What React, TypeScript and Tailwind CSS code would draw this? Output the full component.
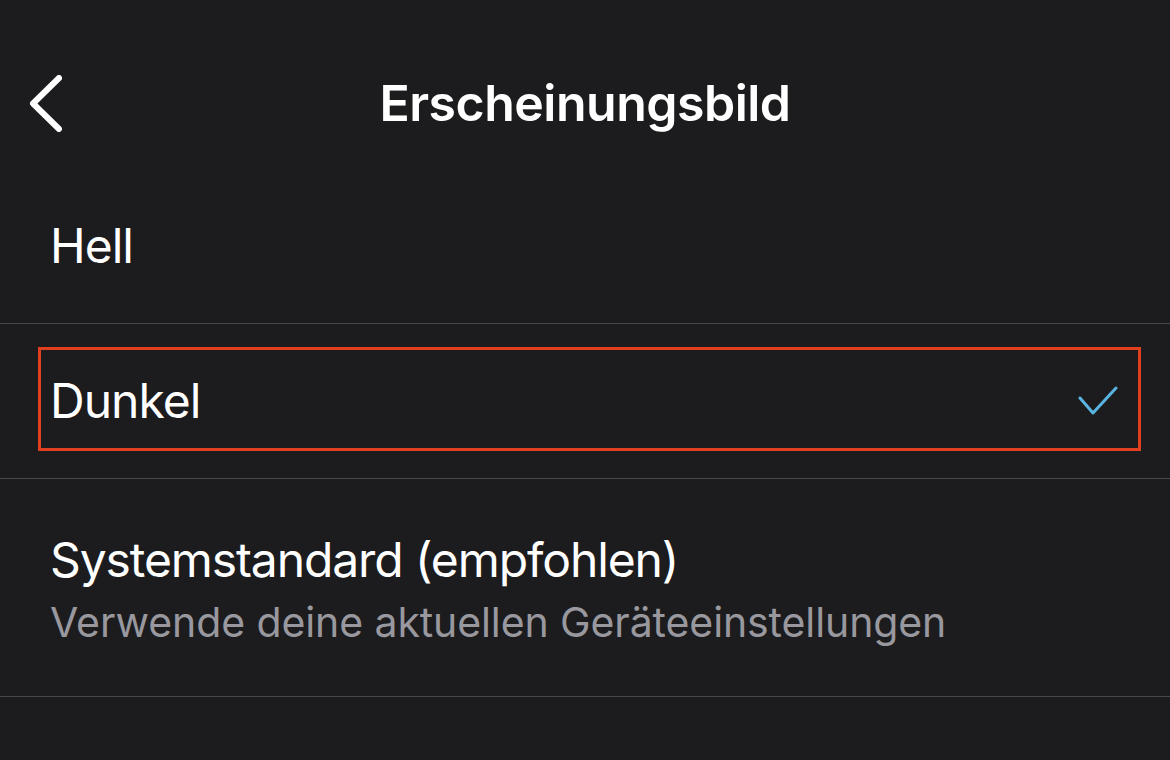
export default function App() {
  return (
    <div className="h-[760px] w-[1170px] overflow-hidden bg-[#1c1c1e] text-white" style={{ fontFamily: 'Inter, "Noto Sans", sans-serif' }}>
      <header className="relative flex h-[169px] justify-center pt-[71px]">
        <button className="absolute left-[28px] top-[75px] flex h-[57px] w-[34px] items-center justify-center">
          <svg width="34" height="57" viewBox="0 0 34 57" fill="none">
            <path d="M31 3 L5 28.5 L31 54" stroke="white" strokeWidth="6" strokeLinecap="round" strokeLinejoin="round" />
          </svg>
        </button>
        <h1 className="h-[64px] text-[50px] leading-[64px] font-semibold tracking-[-0.5px]">Erscheinungsbild</h1>
      </header>

      <div className="flex h-[155px] items-center border-b border-[#48484a] px-[50px]">
        <span className="text-[48px] tracking-[-1px]">Hell</span>
      </div>

      <div className="relative flex h-[155px] items-center justify-between border-b border-[#48484a] pl-[50px] pr-[52px]">
        <span className="text-[48px] tracking-[-1px]">Dunkel</span>
        <svg width="40" height="30" viewBox="0 0 40 30" fill="none">
          <path d="M2 12 L15 27 L38 2" stroke="#5ab4e1" strokeWidth="3" strokeLinecap="round" strokeLinejoin="round" />
        </svg>
        <div className="pointer-events-none absolute left-[38px] top-[23px] h-[104px] w-[1103px] border-[3px] border-[#e0401f]" />
      </div>

      <div className="flex h-[218px] flex-col justify-center border-b border-[#48484a] px-[50px] pt-[2px]">
        <span className="text-[48px] leading-[60px] tracking-[-1.1px]">Systemstandard (empfohlen)</span>
        <span className="mt-[6px] text-[41px] leading-[52px] tracking-[-0.1px] text-[#98989e]">Verwende deine aktuellen Geräteeinstellungen</span>
      </div>
    </div>
  );
}
